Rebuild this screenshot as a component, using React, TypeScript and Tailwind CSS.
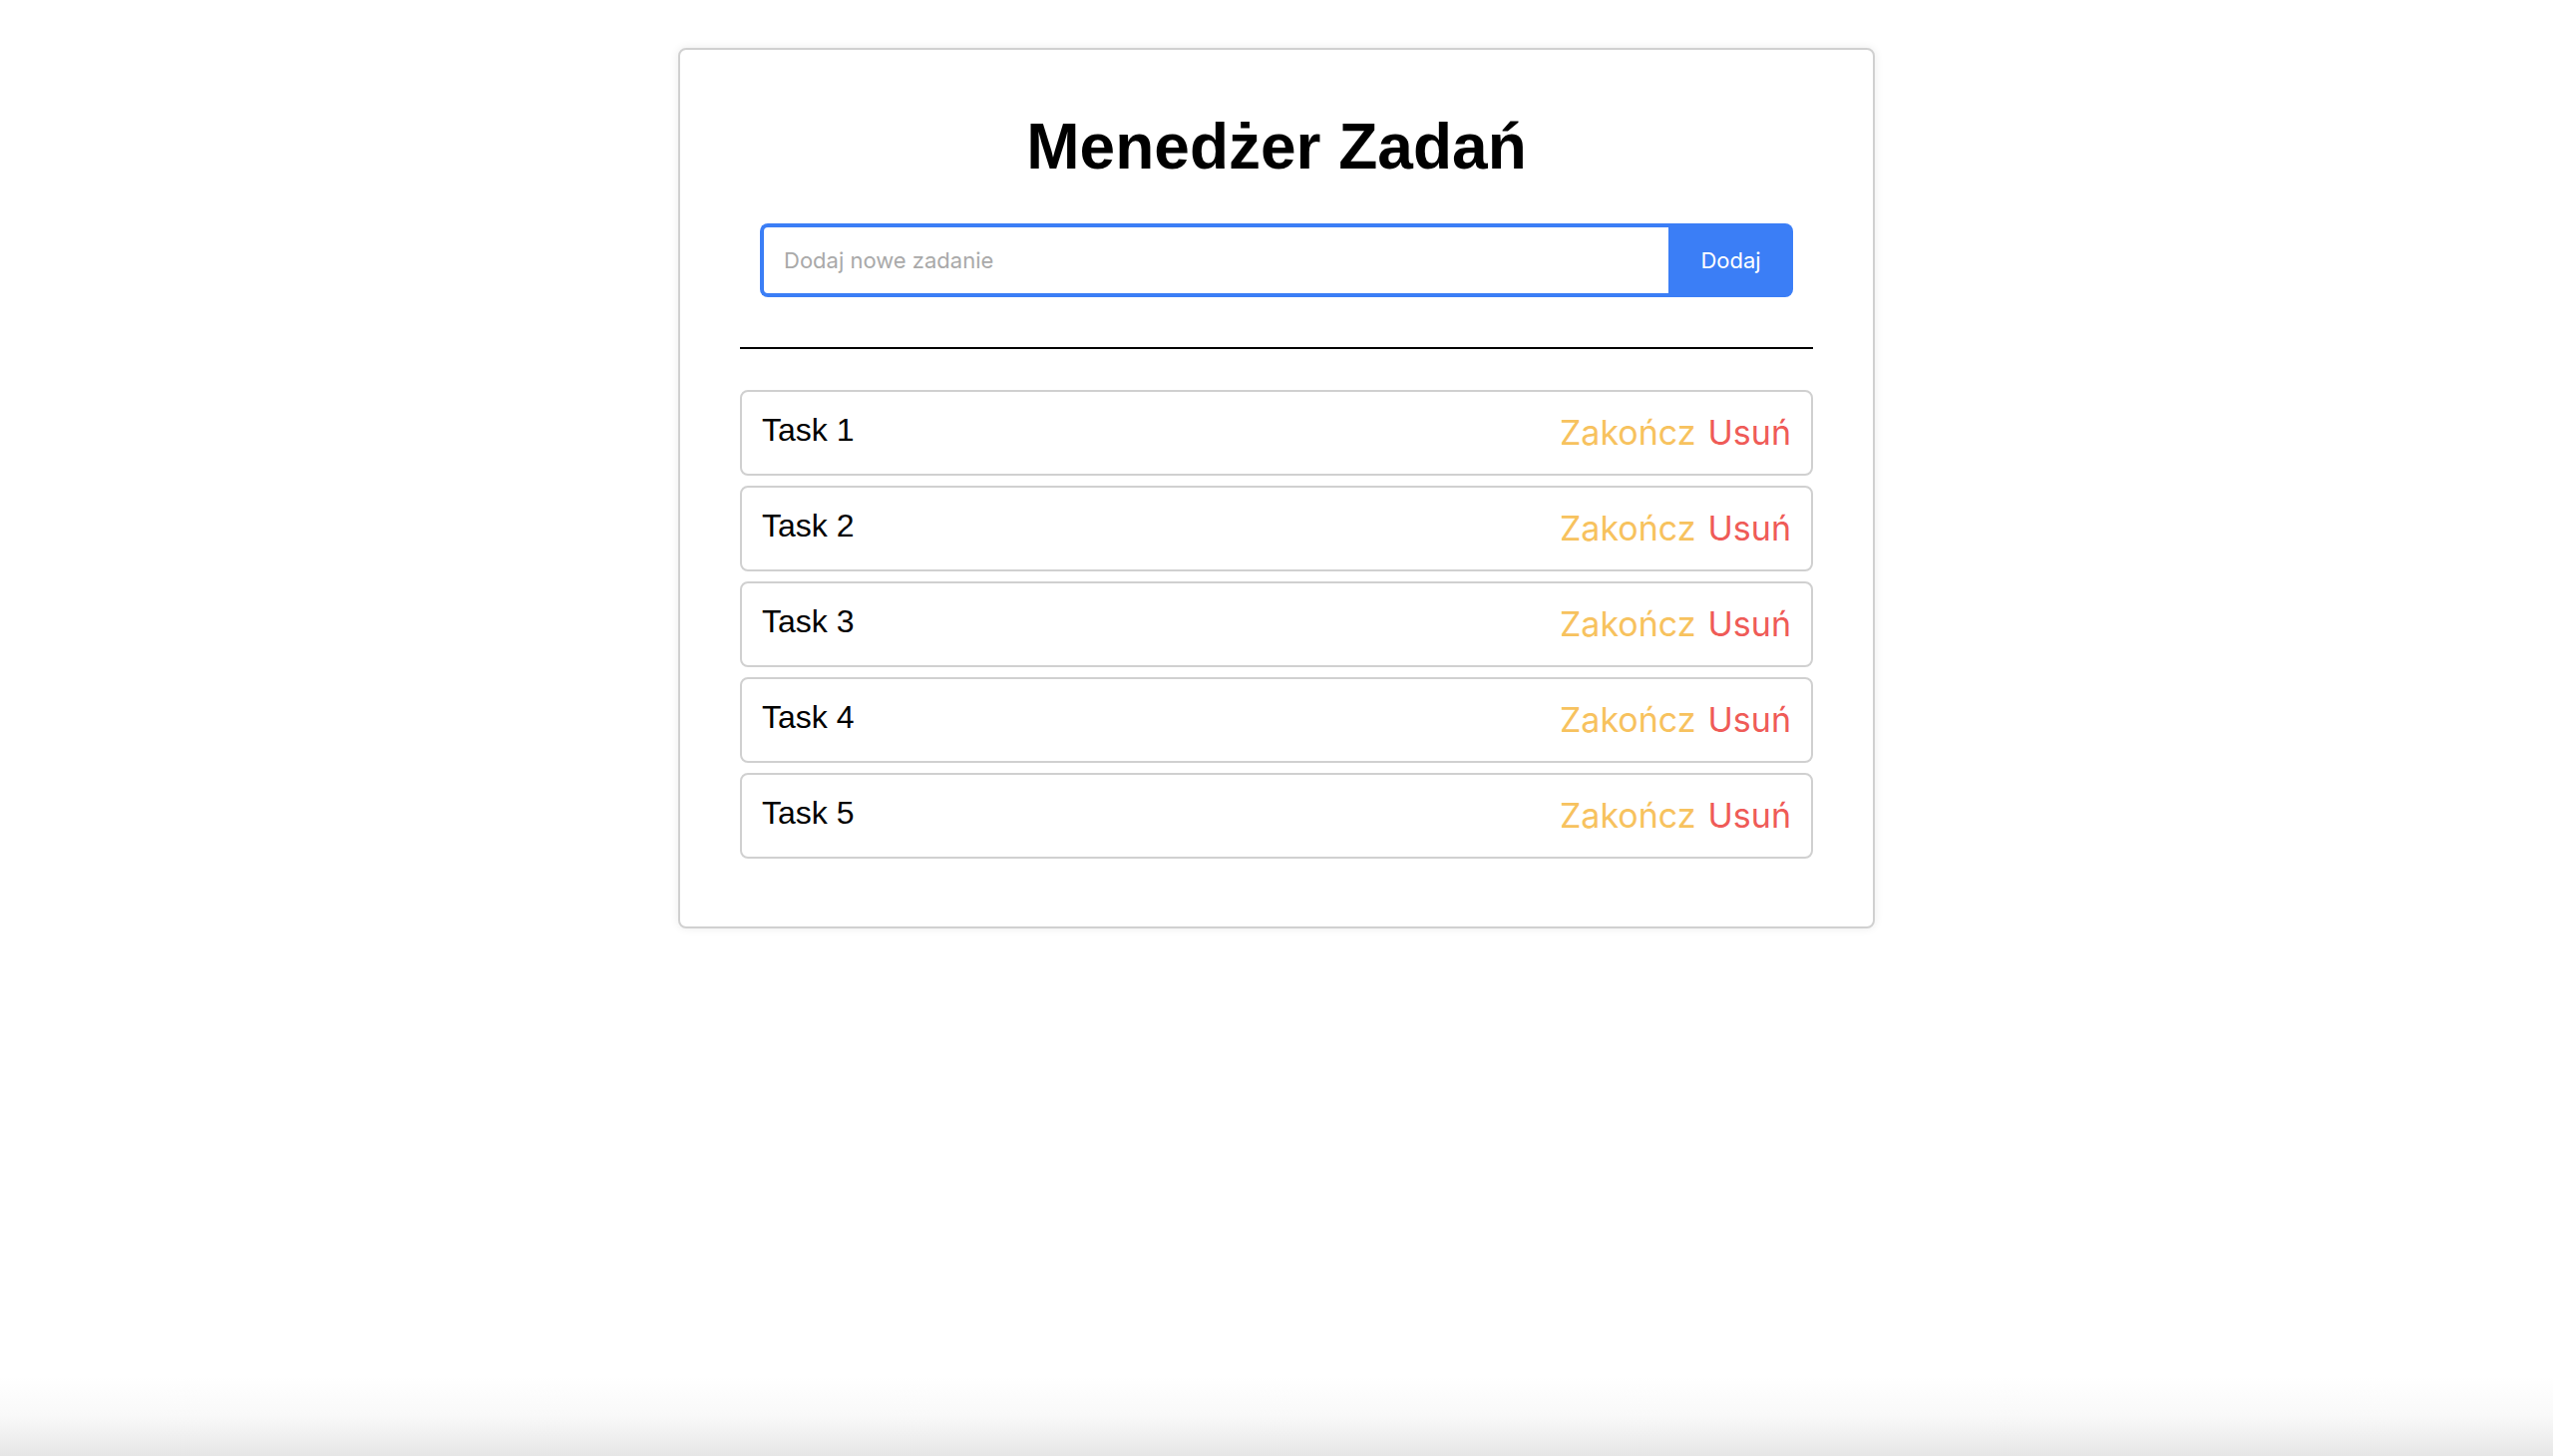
import React from "react";

const tasks = ["Task 1", "Task 2", "Task 3", "Task 4", "Task 5"];

export default function App() {
  return (
    <div className="flex h-[1460px] flex-col bg-white">
      <div className="mx-auto mt-[48px] w-[1200px] rounded-[8px] border-2 border-[#d0d0d0] bg-white px-[60px] pb-[68px] pt-[60px] shadow-[0_0_10px_rgba(0,0,0,0.08)]">
        <h1 className="mb-[40px] text-center font-['Liberation_Sans',Arial,sans-serif] text-[64px] font-bold leading-[74px] text-black">
          Menedżer Zadań
        </h1>
        <form
          className="mx-[20px] flex h-[74px]"
          onSubmit={(e) => e.preventDefault()}
        >
          <input
            type="text"
            placeholder="Dodaj nowe zadanie"
            className="min-w-0 flex-1 rounded-l-[8px] border-4 border-r-0 border-[#3b7ef6] bg-white px-[20px] font-['Inter',sans-serif] text-[22px] text-black outline-none placeholder:text-[#a9a9a9]"
          />
          <button
            type="submit"
            className="w-[125px] rounded-r-[8px] bg-[#3b7ef6] font-['Inter',sans-serif] text-[22px] text-white"
          >
            Dodaj
          </button>
        </form>
        <hr className="mb-[41px] mt-[50px] border-0 border-t-2 border-black" />
        <div className="flex flex-col gap-[10px]">
          {tasks.map((t) => (
            <div
              key={t}
              className="flex items-start justify-between rounded-[8px] border-2 border-[#d0d0d0] px-[20px] py-[20px]"
            >
              <span className="font-['Liberation_Sans',Arial,sans-serif] text-[32px] leading-[37px] text-black">
                {t}
              </span>
              <div className="flex gap-[12px] font-['Inter',sans-serif] text-[34px] leading-[42px]">
                <button className="text-[#f7c25e]">Zakończ</button>
                <button className="text-[#ef5b57]">Usuń</button>
              </div>
            </div>
          ))}
        </div>
      </div>
      <div className="flex-1" />
      <div className="h-[80px] bg-gradient-to-b from-white via-[#f9f9f9] to-[#e6e6e6]" />
    </div>
  );
}
